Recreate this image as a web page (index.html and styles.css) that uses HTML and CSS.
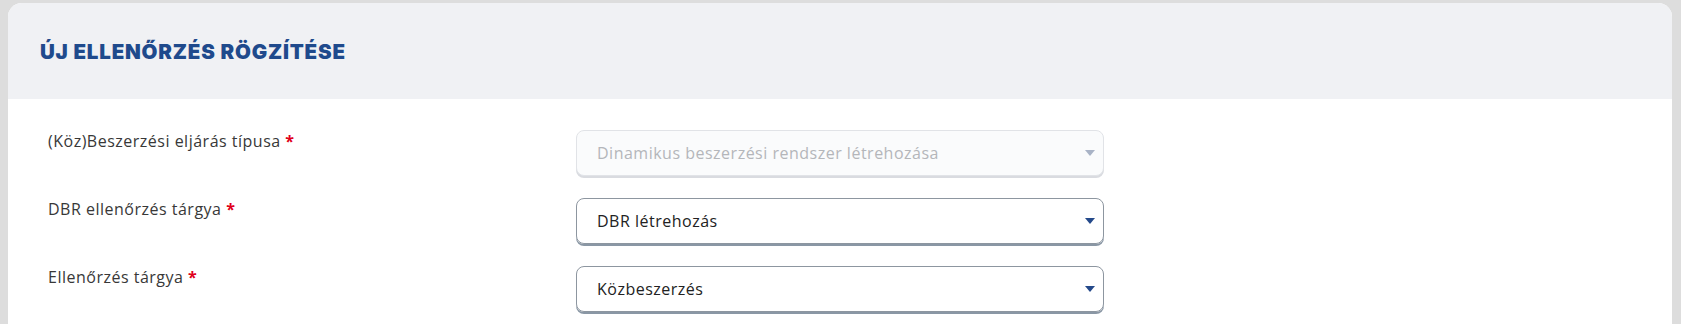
FILE: index.html
```html
<!DOCTYPE html>
<html lang="hu">
<head>
    <meta charset="UTF-8">
    <meta name="viewport" content="width=device-width, initial-scale=1.0">
    <title>Új ellenőrzés rögzítése</title>
    <link rel="stylesheet" href="styles.css">
</head>
<body>
    <!-- Card -->
    <div class="card">
        <div class="card-header">
            <h1>ÚJ ELLENŐRZÉS RÖGZÍTÉSE</h1>
        </div>

        <!-- Form rows -->
        <div class="card-body">
            <div class="form-row">
                <label>(Köz)Beszerzési eljárás típusa <span class="req">*</span></label>
                <div class="select disabled">
                    <span>Dinamikus beszerzési rendszer létrehozása</span>
                    <svg class="caret" width="10" height="6" viewBox="0 0 10 6"><path d="M0 0h10L5 6z"/></svg>
                </div>
            </div>
            <div class="form-row">
                <label>DBR ellenőrzés tárgya <span class="req">*</span></label>
                <div class="select">
                    <span>DBR létrehozás</span>
                    <svg class="caret" width="10" height="6" viewBox="0 0 10 6"><path d="M0 0h10L5 6z"/></svg>
                </div>
            </div>
            <div class="form-row">
                <label>Ellenőrzés tárgya <span class="req">*</span></label>
                <div class="select">
                    <span>Közbeszerzés</span>
                    <svg class="caret" width="10" height="6" viewBox="0 0 10 6"><path d="M0 0h10L5 6z"/></svg>
                </div>
            </div>
        </div>
    </div>
</body>
</html>
```

FILE: styles.css
```css
/* Page */
body {
    margin: 0;
    padding: 3px 9px 0 8px;
    background: #dddddd;
    font-family: 'Open Sans', sans-serif;
    color: #333;
}

/* Card */
.card {
    background: #fff;
    border-radius: 14px 14px 0 0;
    overflow: hidden;
    height: 330px;
}

.card-header {
    background: #f0f1f4;
    height: 96px;
    display: flex;
    align-items: center;
    padding-left: 32px;
}

.card-header h1 {
    margin: 0;
    font-family: 'Inter', sans-serif;
    font-size: 20.5px;
    font-weight: 900;
    color: #1f4a8c;
    letter-spacing: 0.8px;
}

.card-body {
    padding: 31px 0 0 40px;
    display: flex;
    flex-direction: column;
    gap: 22px;
}

/* Form row */
.form-row {
    display: grid;
    grid-template-columns: 528px 528px;
}

.form-row label {
    font-size: 16px;
    letter-spacing: 0.5px;
    color: #383838;
}

.req {
    color: #e0001a;
    font-weight: 700;
}

/* Select */
.select {
    height: 44px;
    border: 1px solid #8d96a0;
    border-radius: 8px;
    box-shadow: 0 2px 0 #8a97a5;
    display: flex;
    align-items: center;
    justify-content: space-between;
    padding: 0 8px 0 20px;
    font-size: 16px;
    letter-spacing: 0.5px;
    color: #222;
}

.select .caret {
    fill: #24498a;
}

.select.disabled {
    background: #fafbfc;
    border-color: #e1e3e7;
    box-shadow: 0 2px 0 #d9dbe0;
    color: #b4b6ba;
}

.select.disabled .caret {
    fill: #a9b3c6;
}
```
